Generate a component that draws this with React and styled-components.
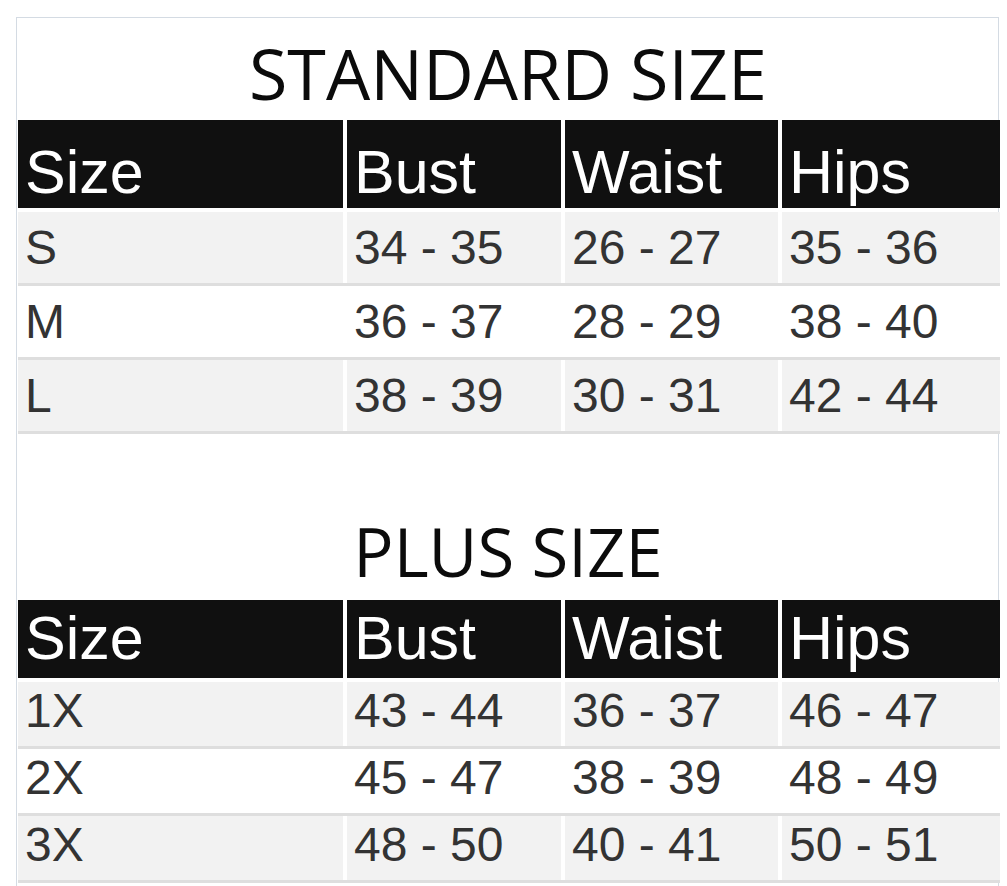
import styled, { createGlobalStyle } from "styled-components";

const GlobalStyle = createGlobalStyle`
  html, body {
    margin: 0;
    padding: 0;
    background: #ffffff;
  }
`;

const Frame = styled.div`
  box-sizing: border-box;
  width: 983px;
  margin: 17px 0 0 16px;
  padding: 0 0 3px 1px;
  border: 1px solid #d4dbe3;
  border-bottom: none;
  background: #ffffff;
`;

const Title = styled.h2`
  margin: ${(p) => p.$margin};
  height: ${(p) => p.$size}px;
  font-family: "Open Sans", "Liberation Sans", sans-serif;
  font-size: ${(p) => p.$size}px;
  font-weight: 400;
  line-height: 1;
  color: #0b0b0b;
  text-align: center;
`;

const Grid = styled.div`
  width: 982px;
  font-family: "Liberation Sans", Arial, sans-serif;
`;

const Row = styled.div`
  display: grid;
  grid-template-columns: 325px 214px 213px 218px;
  column-gap: 4px;
`;

const HeadRow = styled(Row)`
  height: ${(p) => p.$height}px;
`;

const HeadCell = styled.div`
  box-sizing: border-box;
  background: #101010;
  color: #ffffff;
  font-size: 61px;
  line-height: ${(p) => p.$lh}px;
  padding: ${(p) => p.$pt}px 0 0 7px;
  white-space: nowrap;
  overflow: hidden;
`;

const BodyRow = styled(Row)`
  height: ${(p) => p.$height}px;
  border-bottom: 3px solid #dedede;
  &:first-of-type {
    margin-top: 4px;
  }
`;

const Cell = styled.div`
  box-sizing: border-box;
  background: ${(p) => (p.$shade ? "#f2f2f2" : "#ffffff")};
  color: #333333;
  font-size: 48px;
  line-height: ${(p) => p.$lh}px;
  padding-left: 7px;
  white-space: nowrap;
`;

const Body = styled.div``;

const headers = ["Size", "Bust", "Waist", "Hips"];

const standard = [
  ["S", "34 - 35", "26 - 27", "35 - 36"],
  ["M", "36 - 37", "28 - 29", "38 - 40"],
  ["L", "38 - 39", "30 - 31", "42 - 44"],
];

const plus = [
  ["1X", "43 - 44", "36 - 37", "46 - 47"],
  ["2X", "45 - 47", "38 - 39", "48 - 49"],
  ["3X", "48 - 50", "40 - 41", "50 - 51"],
];

function SizeTable({ rows, head, row }) {
  return (
    <Grid role="table">
      <HeadRow role="row" $height={head.height}>
        {headers.map((h) => (
          <HeadCell key={h} role="columnheader" $lh={head.lh} $pt={head.pt}>
            {h}
          </HeadCell>
        ))}
      </HeadRow>
      <Body>
        {rows.map((r, i) => (
          <BodyRow key={r[0]} role="row" $height={row.height}>
            {r.map((v, j) => (
              <Cell key={j} role="cell" $shade={i % 2 === 0} $lh={row.lh}>
                {v}
              </Cell>
            ))}
          </BodyRow>
        ))}
      </Body>
    </Grid>
  );
}

export default function App() {
  return (
    <>
      <GlobalStyle />
      <Frame>
        <Title $size={70} $margin="20px 0 12px">
          STANDARD SIZE
        </Title>
        <SizeTable
          rows={standard}
          head={{ height: 88, lh: 72, pt: 16 }}
          row={{ height: 71, lh: 71 }}
        />
        <Title $size={67} $margin="84px 0 15px">
          PLUS SIZE
        </Title>
        <SizeTable
          rows={plus}
          head={{ height: 78, lh: 76, pt: 0 }}
          row={{ height: 64, lh: 57 }}
        />
      </Frame>
    </>
  );
}
